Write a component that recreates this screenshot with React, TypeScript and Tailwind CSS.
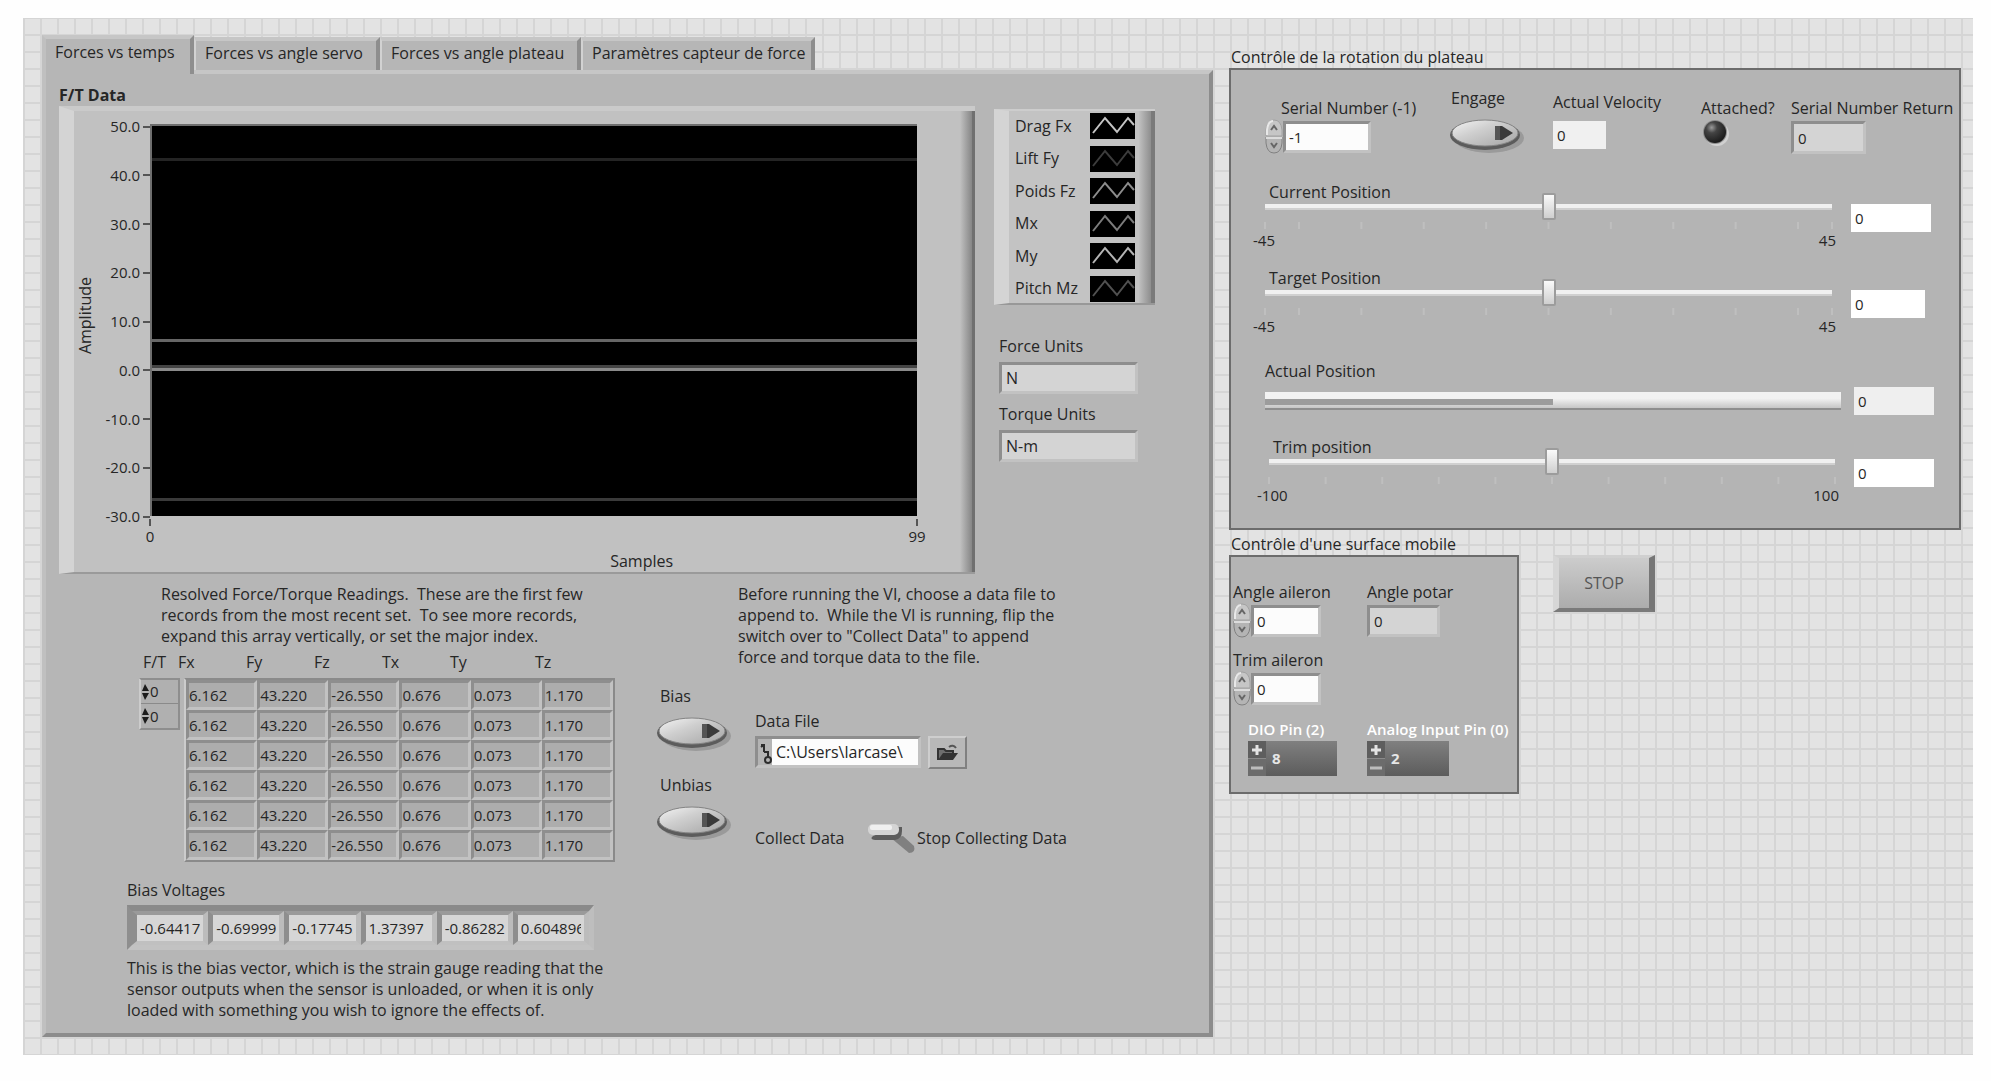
import type { ReactNode } from 'react';
import { useState } from 'react';
import { clsx } from 'clsx';

const TABS = [
  { label: 'Forces vs temps', width: 'w-[152px]' },
  { label: 'Forces vs angle servo', width: 'w-[186px]' },
  { label: 'Forces vs angle plateau', width: 'w-[201px]' },
  { label: 'Paramètres capteur de force', width: 'w-[234px]' },
];

const Y_TICKS = ['50.0', '40.0', '30.0', '20.0', '10.0', '0.0', '-10.0', '-20.0', '-30.0'];

const TRACES = [
  { value: 43.22, color: '#242424' },
  { value: 6.162, color: '#666666' },
  { value: 0.676, color: '#444444' },
  { value: 0.073, color: '#8a8a8a' },
  { value: -26.55, color: '#3a3a3a' },
];

const LEGEND = [
  { name: 'Drag Fx', color: '#c4c4c4' },
  { name: 'Lift Fy', color: '#3c3c3c' },
  { name: 'Poids Fz', color: '#8c8c8c' },
  { name: 'Mx', color: '#7c7c7c' },
  { name: 'My', color: '#b4b4b4' },
  { name: 'Pitch Mz', color: '#505050' },
];

const READING = ['6.162', '43.220', '-26.550', '0.676', '0.073', '1.170'];
const ROWS = [0, 1, 2, 3, 4, 5];

const HEADINGS = [
  { text: 'F/T', width: 'w-[35px]' },
  { text: 'Fx', width: 'w-[68px]' },
  { text: 'Fy', width: 'w-[68px]' },
  { text: 'Fz', width: 'w-[68px]' },
  { text: 'Tx', width: 'w-[68px]' },
  { text: 'Ty', width: 'w-[85px]' },
  { text: 'Tz', width: 'w-[35px]' },
];

const BIAS = ['-0.644179', '-0.699991', '-0.177453', '1.37397', '-0.862821', '0.604896'];

const TICKS_45 = [0, 6, 17, 28, 39, 50, 61, 72, 83, 94, 100];
const TICKS_100 = [0, 10, 20, 30, 40, 50, 60, 70, 80, 90, 100];

const SUNKEN =
  'border-t-[3px] border-l-[3px] border-r-[3px] border-b-[3px] border-t-[#8e8e8e] border-l-[#8e8e8e] border-r-[#c2c2c2] border-b-[#c2c2c2]';

function OvalButton({ label }: { label: string }) {
  return (
    <button type="button" aria-label={label} className="block h-9 w-[76px]">
      <svg viewBox="0 0 76 36" className="h-9 w-[76px]">
        <defs>
          <linearGradient id={`oval-${label}`} x1="0" y1="0" x2="1" y2="1">
            <stop offset="0" stopColor="#f4f4f4" />
            <stop offset="0.4" stopColor="#cfcfcf" />
            <stop offset="1" stopColor="#a4a4a4" />
          </linearGradient>
        </defs>
        <ellipse cx="40" cy="20" rx="35" ry="15" fill="#8f8f8f" opacity="0.7" />
        <ellipse cx="36" cy="17" rx="35" ry="15" fill="#5c5c5c" />
        <ellipse cx="36" cy="15" rx="33" ry="13" fill={`url(#oval-${label})`} stroke="#858585" strokeWidth="1" />
        <path d="M46 8 h7 l11 7 l-11 7 h-7 z" fill="#3a3a3a" />
        <path d="M46 8 h5 v14 h-5 z" fill="#555555" />
      </svg>
    </button>
  );
}

function Spinner({ label }: { label: string }) {
  return (
    <div className="flex h-[35px] w-[18px] flex-col">
      <button type="button" aria-label={`${label} +`} className="h-[18px]">
        <svg viewBox="0 0 18 18" className="h-[18px] w-[18px]">
          <path d="M1 17 V11 Q2 1 9 1 Q16 1 17 11 V17 Z" fill="#c6c6c6" stroke="#a2a2a2" />
          <path d="M2 16 V11 Q3 2 8 2" fill="none" stroke="#e8e8e8" strokeWidth="2" />
          <path d="M6 11 L9 7 L12 11" fill="none" stroke="#666666" strokeWidth="2" />
        </svg>
      </button>
      <button type="button" aria-label={`${label} -`} className="h-[17px]">
        <svg viewBox="0 0 18 17" className="h-[17px] w-[18px]">
          <path d="M1 0 V6 Q2 16 9 16 Q16 16 17 6 V0 Z" fill="#b4b4b4" stroke="#808080" />
          <path d="M1 1 H17" stroke="#dcdcdc" strokeWidth="2" />
          <path d="M6 6 L9 10 L12 6" fill="none" stroke="#666666" strokeWidth="2" />
        </svg>
      </button>
    </div>
  );
}

function SpinField({ id, label, value, width }: { id: string; label: string; value: string; width: string }) {
  return (
    <div className="flex flex-col">
      <label htmlFor={id} className="whitespace-nowrap">
        {label}
      </label>
      <div className="flex items-start">
        <Spinner label={label} />
        <input id={id} defaultValue={value} className={clsx('mt-[2px] h-8 bg-[#fcfcfc] px-[3px] text-[15px]', SUNKEN, width)} />
      </div>
    </div>
  );
}

type SliderProps = {
  id: string;
  label: string;
  min: number;
  max: number;
  ticks: number[];
  fieldWidth: string;
};

function SliderRow({ id, label, min, max, ticks, fieldWidth }: SliderProps) {
  const [value, setValue] = useState(0);

  return (
    <div className="flex">
      <div className="min-w-0 flex-1">
        <label htmlFor={id} className="block pl-1">
          {label}
        </label>
        <input
          id={id}
          type="range"
          min={min}
          max={max}
          value={value}
          onChange={e => setValue(Number(e.target.value))}
          className="-mt-[10px] block h-[27px] w-full appearance-none bg-transparent [&::-webkit-slider-runnable-track]:h-[6px] [&::-webkit-slider-runnable-track]:border-b-2 [&::-webkit-slider-runnable-track]:border-[#d0d0d0] [&::-webkit-slider-runnable-track]:bg-[#f0f0f0] [&::-webkit-slider-thumb]:-mt-[11px] [&::-webkit-slider-thumb]:h-[27px] [&::-webkit-slider-thumb]:w-[14px] [&::-webkit-slider-thumb]:appearance-none [&::-webkit-slider-thumb]:rounded-[2px] [&::-webkit-slider-thumb]:border-2 [&::-webkit-slider-thumb]:border-[#9c9c9c] [&::-webkit-slider-thumb]:bg-linear-to-b [&::-webkit-slider-thumb]:from-[#fafafa] [&::-webkit-slider-thumb]:to-[#cfcfcf]"
        />
        <svg className="block h-[10px] w-full overflow-visible">
          {ticks.map(t => (
            <line key={t} x1={`${t}%`} x2={`${t}%`} y1="2" y2="9" stroke="#bfbfbf" strokeWidth="2" />
          ))}
        </svg>
        <div className="-ml-3 -mr-1 flex justify-between text-[15px]">
          <span>{min}</span>
          <span>{max}</span>
        </div>
      </div>
      <div className="ml-[19px] w-[83px]">
        <input
          aria-label={`${label} value`}
          value={value}
          readOnly
          className={clsx('mt-[22px] h-7 bg-white px-1 text-[15px]', fieldWidth)}
        />
      </div>
    </div>
  );
}

function PinField({ id, label, value, width }: { id: string; label: string; value: string; width: string }) {
  return (
    <div className="text-[15px]">
      <label htmlFor={id} className="block whitespace-nowrap font-semibold text-white">
        {label}
      </label>
      <div className={clsx('mt-[1px] flex h-[35px] bg-linear-to-b from-[#808080] to-[#5c5c5c]', width)}>
        <div className="flex w-[18px] shrink-0 flex-col gap-px bg-[#8a8a8a]">
          <button type="button" aria-label={`${label} +`} className="flex h-[17px] items-center justify-center bg-[#5e5e5e]">
            <svg viewBox="0 0 10 10" className="h-[10px] w-[10px]">
              <path d="M5 0 V10 M0 5 H10" stroke="#e4e4e4" strokeWidth="3" />
            </svg>
          </button>
          <button type="button" aria-label={`${label} -`} className="flex h-[17px] items-center justify-center bg-[#6c6c6c]">
            <svg viewBox="0 0 12 4" className="h-1 w-3">
              <path d="M0 2 H12" stroke="#bdbdbd" strokeWidth="3" />
            </svg>
          </button>
        </div>
        <input id={id} defaultValue={value} className="min-w-0 flex-1 bg-transparent pl-[6px] font-bold text-[#e6e6e6]" />
      </div>
    </div>
  );
}

function Tabs() {
  return (
    <div role="tablist" className="flex items-end">
      {TABS.map((tab, i) => (
        <button
          key={tab.label}
          role="tab"
          type="button"
          aria-selected={i === 0}
          className={clsx(
            'whitespace-nowrap border-r-4 border-t-4 border-r-[#8e8e8e] border-t-[#c6c6c6] bg-[#b6b6b6] text-left',
            tab.width,
            i === 0
              ? 'relative -mb-1 h-[39px] border-l-4 border-l-[#c0c0c0] pb-2 pl-[9px]'
              : 'h-[33px] border-l-2 border-l-[#d2d2d2] pb-1 pl-[9px]',
          )}
        >
          {tab.label}
        </button>
      ))}
    </div>
  );
}

function Chart() {
  return (
    <div className="flex min-w-0 flex-1 border-b-2 border-l-[15px] border-t-[5px] border-b-[#9a9a9a] border-l-[#d4d4d4] border-t-[#cacaca] bg-[#c1c1c1]">
      <div className="flex w-[22px] items-center justify-center">
        <span className="mb-[52px] rotate-180 [writing-mode:vertical-rl]">Amplitude</span>
      </div>
      <div className="mt-[5px] flex h-[411px] w-[54px] flex-col justify-between text-[15px]">
        {Y_TICKS.map(t => (
          <div key={t} className="flex items-center justify-end gap-[3px]">
            <span>{t}</span>
            <span className="h-[2px] w-[7px] bg-[#555]" />
          </div>
        ))}
      </div>
      <div className="min-w-0 flex-1 pt-[13px]">
        <div className="h-[392px] border-l-2 border-t-2 border-[#6e6e6e] bg-black">
          <svg viewBox="0 0 100 390" preserveAspectRatio="none" className="block h-full w-full">
            {TRACES.map(t => (
              <rect key={t.value} x="0" width="100" height="3" y={Math.round(((50 - t.value) / 80) * 390) - 1} fill={t.color} />
            ))}
          </svg>
        </div>
        <div className="-mx-[9px] mt-[3px] flex justify-between text-[15px]">
          {['0', '99'].map(t => (
            <div key={t} className="flex w-[18px] flex-col items-center">
              <span className="h-[7px] w-[2px] bg-[#555]" />
              <span>{t}</span>
            </div>
          ))}
        </div>
        <div className="mt-1 pl-[60%]">Samples</div>
      </div>
      <div className="ml-[43px] w-[15px] border-r-[3px] border-[#707070] bg-linear-to-r from-[#c1c1c1] to-[#868686]" />
    </div>
  );
}

function Legend() {
  return (
    <div className="flex h-[196px] w-[161px] border-b-2 border-l-[15px] border-t-2 border-b-[#989898] border-l-[#d4d4d4] border-t-[#cdcdcd] bg-[#c3c3c3]">
      <ul className="flex flex-1 flex-col justify-between pb-[1px] pl-[6px] pt-[2px]">
        {LEGEND.map(item => (
          <li key={item.name} className="flex items-center justify-between">
            <span className="whitespace-nowrap">{item.name}</span>
            <svg viewBox="0 0 45 26" className="h-[26px] w-[45px] bg-black">
              <path d="M3 20 L15 5 L27 19 L38 5 L44 12" fill="none" stroke={item.color} strokeWidth="2" />
            </svg>
          </li>
        ))}
      </ul>
      <div className="ml-1 w-[16px] border-r-4 border-[#7a7a7a] bg-linear-to-r from-[#c0c0c0] to-[#8e8e8e]" />
    </div>
  );
}

function UnitField({ id, label, value }: { id: string; label: string; value: string }) {
  return (
    <div className="flex flex-col pl-[5px]">
      <label htmlFor={id}>{label}</label>
      <input id={id} readOnly value={value} className={clsx('mt-[5px] h-8 w-[139px] bg-[#d4d4d4] px-1', SUNKEN)} />
    </div>
  );
}

function Readings() {
  return (
    <div className="flex items-start gap-1 pl-3 text-[15px]">
      <div className="w-[41px] border-2 border-[#8e8e8e] border-l-[#cccccc] bg-[#b0b0b0]">
        {['Record index', 'Column index'].map(name => (
          <div key={name} className="flex h-6 items-center border-b border-[#8a8a8a] last:border-b-0">
            <svg viewBox="0 0 9 18" className="h-[18px] w-[9px] shrink-0">
              <path d="M1 8 L4 1 L8 8 Z M1 10 L4 17 L8 10 Z" fill="#1c1c1c" />
            </svg>
            <input aria-label={name} defaultValue="0" className="min-w-0 flex-1 bg-transparent" />
          </div>
        ))}
      </div>
      <div className="w-[431px] border-2 border-b-[#8a8a8a] border-l-[#cccccc] border-r-[#8a8a8a] border-t-[#8a8a8a]">
        <table className="w-full table-fixed border-separate border-spacing-0" aria-label="Resolved Force/Torque Readings">
          <tbody>
            {ROWS.map(row => (
              <tr key={row} className="h-[30px]">
                {READING.map((cell, i) => (
                  <td
                    key={i}
                    className="border-b-[3px] border-l-[3px] border-r-[3px] border-t-[3px] border-b-[#c2c2c2] border-l-[#8e8e8e] border-r-[#c2c2c2] border-t-[#8e8e8e] bg-[#adadad] p-0"
                  >
                    {cell}
                  </td>
                ))}
              </tr>
            ))}
          </tbody>
        </table>
      </div>
    </div>
  );
}

function BiasVoltages() {
  return (
    <div className="flex h-[45px] w-[467px] border-b-[5px] border-l-[5px] border-r-[5px] border-t-[6px] border-b-[#c2c2c2] border-l-[#8e8e8e] border-r-[#bebebe] border-t-[#8a8a8a] text-[15px]">
      {BIAS.map(v => (
        <div
          key={v}
          className="min-w-0 flex-1 border-b-[4px] border-l-[5px] border-r-[5px] border-t-[4px] border-b-[#c0c0c0] border-l-[#8e8e8e] border-r-[#bcbcbc] border-t-[#9a9a9a] bg-[#d6d6d6]"
        >
          <input aria-label={`Bias ${v}`} readOnly value={v} className="h-full w-full bg-transparent px-[3px]" />
        </div>
      ))}
    </div>
  );
}

function DataFile() {
  return (
    <div>
      <label htmlFor="data-file">Data File</label>
      <div className="mt-1 flex items-start gap-[7px]">
        <div className={clsx('flex h-8 w-[166px] bg-[#b4b4b4]', SUNKEN)}>
          <svg viewBox="0 0 14 26" className="h-[26px] w-[14px] shrink-0">
            <path d="M3 6 H6 V13 M3 8 L6 6 M6 13 H10 V18 M10 21 m-3 0 a3 3 0 1 0 6 0 a3 3 0 1 0 -6 0" fill="none" stroke="#2c2c2c" strokeWidth="2" />
          </svg>
          <input id="data-file" defaultValue="C:\Users\larcase\" className="min-w-0 flex-1 bg-[#fcfcfc] pl-1" />
        </div>
        <button
          type="button"
          aria-label="Browse"
          className="flex h-[33px] w-[39px] items-center justify-center border-2 border-b-[#808080] border-l-[#cecece] border-r-[#808080] border-t-[#cecece] bg-[#b8b8b8]"
        >
          <svg viewBox="0 0 22 18" className="h-[18px] w-[22px]">
            <path d="M1 16 V5 H7 L9 7 H16 V10" fill="#6e6e6e" stroke="#333" strokeWidth="2" />
            <path d="M1 16 L6 9 H21 L16 16 Z" fill="#333" />
            <path d="M12 3 Q16 0 19 4" fill="none" stroke="#555" strokeWidth="2" />
          </svg>
        </button>
      </div>
    </div>
  );
}

function CollectSwitch() {
  return (
    <div className="flex items-center whitespace-nowrap">
      <span className="w-[112px]">Collect Data</span>
      <button type="button" role="switch" aria-checked="false" aria-label="Collect Data" className="h-8 w-[50px]">
        <svg viewBox="0 0 50 32" className="h-8 w-[50px]">
          <path d="M24 16 L36 14 L47 24 Q49 31 42 31 Z" fill="#808080" />
          <path d="M6 14 Q2 17 8 18 H28 Q35 17 35 9 V5 H30 Z" fill="#5c5c5c" />
          <rect x="1" y="2" width="31" height="11" rx="5" fill="#d4d4d4" />
          <rect x="3" y="3" width="22" height="5" rx="2" fill="#f0f0f0" />
        </svg>
      </button>
      <span>Stop Collecting Data</span>
    </div>
  );
}

function Paragraph({ lines, className }: { lines: string[]; className?: string }) {
  return (
    <p className={clsx('whitespace-pre', className)}>
      {lines.join('\n')}
    </p>
  );
}

function SensorPanel() {
  return (
    <section className="min-w-0">
      <Tabs />
      <div className="border-b-4 border-l-4 border-r-4 border-t-4 border-b-[#8c8c8c] border-l-[#c0c0c0] border-r-[#8c8c8c] border-t-[#c6c6c6] bg-[#b6b6b6] pb-3 pl-[13px] pt-[11px]">
        <h2 className="font-bold">F/T Data</h2>
        <div className="flex gap-[19px] pr-[54px]">
          <Chart />
          <div className="flex flex-col pt-[3px]">
            <Legend />
            <div className="mt-[31px] flex flex-col gap-[10px]">
              <UnitField id="force-units" label="Force Units" value="N" />
              <UnitField id="torque-units" label="Torque Units" value="N-m" />
            </div>
          </div>
        </div>
        <div className="flex pl-[68px] pt-[10px]">
          <div className="w-[529px] shrink-0">
            <Paragraph
              className="pl-[34px]"
              lines={[
                'Resolved Force/Torque Readings.  These are the first few',
                'records from the most recent set.  To see more records,',
                'expand this array vertically, or set the major index.',
              ]}
            />
            <div className="mb-[5px] mt-[5px] flex pl-4">
              {HEADINGS.map(h => (
                <span key={h.text} className={h.width}>
                  {h.text}
                </span>
              ))}
            </div>
            <Readings />
            <h3 className="mb-1 mt-[18px]">Bias Voltages</h3>
            <BiasVoltages />
            <Paragraph
              className="mt-2"
              lines={[
                'This is the bias vector, which is the strain gauge reading that the',
                'sensor outputs when the sensor is unloaded, or when it is only',
                'loaded with something you wish to ignore the effects of.',
              ]}
            />
          </div>
          <div>
            <Paragraph
              className="pl-[82px]"
              lines={[
                'Before running the VI, choose a data file to',
                'append to.  While the VI is running, flip the',
                'switch over to "Collect Data" to append',
                'force and torque data to the file.',
              ]}
            />
            <div className="mt-[18px] flex">
              <div className="w-[99px]">
                <div className="pl-1">Bias</div>
                <div className="mb-[23px] mt-[9px]">
                  <OvalButton label="Bias" />
                </div>
                <div className="pl-1">Unbias</div>
                <div className="mt-[9px]">
                  <OvalButton label="Unbias" />
                </div>
              </div>
              <div className="flex w-[320px] flex-col gap-[53px] pt-[25px]">
                <DataFile />
                <CollectSwitch />
              </div>
            </div>
          </div>
        </div>
      </div>
    </section>
  );
}

function Field({ label, className, children }: { label: string; className?: string; children: ReactNode }) {
  return (
    <label className={clsx('flex flex-col items-start whitespace-nowrap', className)}>
      {label}
      {children}
    </label>
  );
}

function RotationPanel() {
  return (
    <section>
      <h2 className="pl-[2px]">Contrôle de la rotation du plateau</h2>
      <div className="border-2 border-[#6c6c6c] bg-[#b4b4b4] pb-[22px] pl-[34px] pr-[3px] pt-[18px]">
        <div className="grid grid-cols-[184fr_104fr_148fr_90fr_165fr]">
          <div className="pt-[10px] [&_label]:pl-4">
            <SpinField id="serial" label="Serial Number (-1)" value="-1" width="w-[88px]" />
          </div>
          <div>
            <div className="pl-[2px]">Engage</div>
            <div className="mt-[9px]">
              <OvalButton label="Engage" />
            </div>
          </div>
          <Field label="Actual Velocity" className="pt-1">
            <input readOnly value="0" className="mt-2 h-7 w-[53px] bg-[#f0f0f0] px-1 text-[15px]" />
          </Field>
          <div className="flex flex-col items-start pt-[10px]">
            <span>Attached?</span>
            <svg viewBox="0 0 28 28" className="h-7 w-7">
              <defs>
                <radialGradient id="led" cx="0.35" cy="0.3" r="0.7">
                  <stop offset="0" stopColor="#9a9a9a" />
                  <stop offset="0.35" stopColor="#444444" />
                  <stop offset="1" stopColor="#1c1c1c" />
                </radialGradient>
              </defs>
              <circle cx="16" cy="15" r="12" fill="#d0d0d0" />
              <circle cx="14" cy="13" r="12" fill="#8c8c8c" />
              <circle cx="14" cy="13" r="11" fill="url(#led)" />
            </svg>
          </div>
          <Field label="Serial Number Return" className="pt-[10px]">
            <input readOnly value="0" className={clsx('mt-[2px] h-[33px] w-[75px] bg-[#d4d4d4] px-1 text-[15px]', SUNKEN)} />
          </Field>
        </div>
        <div className="mt-7 flex flex-col gap-[17px] pr-[22px]">
          <SliderRow id="current" label="Current Position" min={-45} max={45} ticks={TICKS_45} fieldWidth="w-20" />
          <SliderRow id="target" label="Target Position" min={-45} max={45} ticks={TICKS_45} fieldWidth="w-[74px]" />
        </div>
        <div className="mb-[22px] mt-6 flex pr-[22px]">
          <div className="min-w-0 flex-1">
            <div>Actual Position</div>
            <div className="mt-[10px] h-[18px] border-b-2 border-[#8e8e8e] bg-linear-to-b from-[#f2f2f2] from-40% to-[#c6c6c6] pt-[7px]">
              <div className="h-[6px] w-1/2 bg-[#9c9c9c]" />
            </div>
          </div>
          <input aria-label="Actual Position" readOnly value="0" className="ml-[13px] mt-[26px] h-7 w-20 bg-[#efefef] px-1 text-[15px]" />
        </div>
        <div className="pl-1 pr-[19px]">
          <SliderRow id="trim" label="Trim position" min={-100} max={100} ticks={TICKS_100} fieldWidth="w-20" />
        </div>
      </div>
    </section>
  );
}

function SurfacePanel() {
  return (
    <section className="mt-1">
      <h2 className="pl-[2px]">Contrôle d'une surface mobile</h2>
      <div className="flex items-start gap-[34px]">
        <div className="h-[239px] w-[290px] border-2 border-[#6c6c6c] bg-[#b4b4b4] pt-[25px]">
          <div className="flex">
            <div className="flex w-[136px] flex-col gap-3 pl-[2px]">
              <SpinField id="angle-aileron" label="Angle aileron" value="0" width="w-[70px]" />
              <SpinField id="trim-aileron" label="Trim aileron" value="0" width="w-[70px]" />
            </div>
            <Field label="Angle potar">
              <input readOnly value="0" className={clsx('mt-[2px] h-8 w-[73px] bg-[#d4d4d4] px-1 text-[15px]', SUNKEN)} />
            </Field>
          </div>
          <div className="mt-[13px] flex pl-[17px]">
            <div className="w-[119px]">
              <PinField id="dio" label="DIO Pin (2)" value="8" width="w-[89px]" />
            </div>
            <PinField id="analog" label="Analog Input Pin (0)" value="2" width="w-[82px]" />
          </div>
        </div>
        <button
          type="button"
          className="h-[57px] w-[102px] border-b-4 border-l-[6px] border-r-[6px] border-t-[3px] border-b-[#7a7a7a] border-l-[#d6d6d6] border-r-[#767676] border-t-[#d0d0d0] bg-linear-to-b from-[#cccccc] to-[#acacac] text-[#555]"
        >
          STOP
        </button>
      </div>
    </section>
  );
}

export default function App() {
  return (
    <div className="bg-[#fefefe] pb-[26px] pl-[23px] pr-[18px] pt-[18px] font-['Open_Sans','Noto_Sans',sans-serif] text-[16px] leading-[21px] text-[#262626]">
      <main className="grid grid-cols-[minmax(0,1171fr)_minmax(0,732fr)] gap-4 bg-[#e3e3e3] bg-[linear-gradient(to_right,#d5d5d5_2px,transparent_2px),linear-gradient(to_bottom,#d5d5d5_2px,transparent_2px)] bg-[size:17px_17px] bg-[position:0_-1px] pb-[18px] pl-[19px] pr-3 pt-[17px]">
        <SensorPanel />
        <div className="pt-3">
          <RotationPanel />
          <SurfacePanel />
        </div>
      </main>
    </div>
  );
}
